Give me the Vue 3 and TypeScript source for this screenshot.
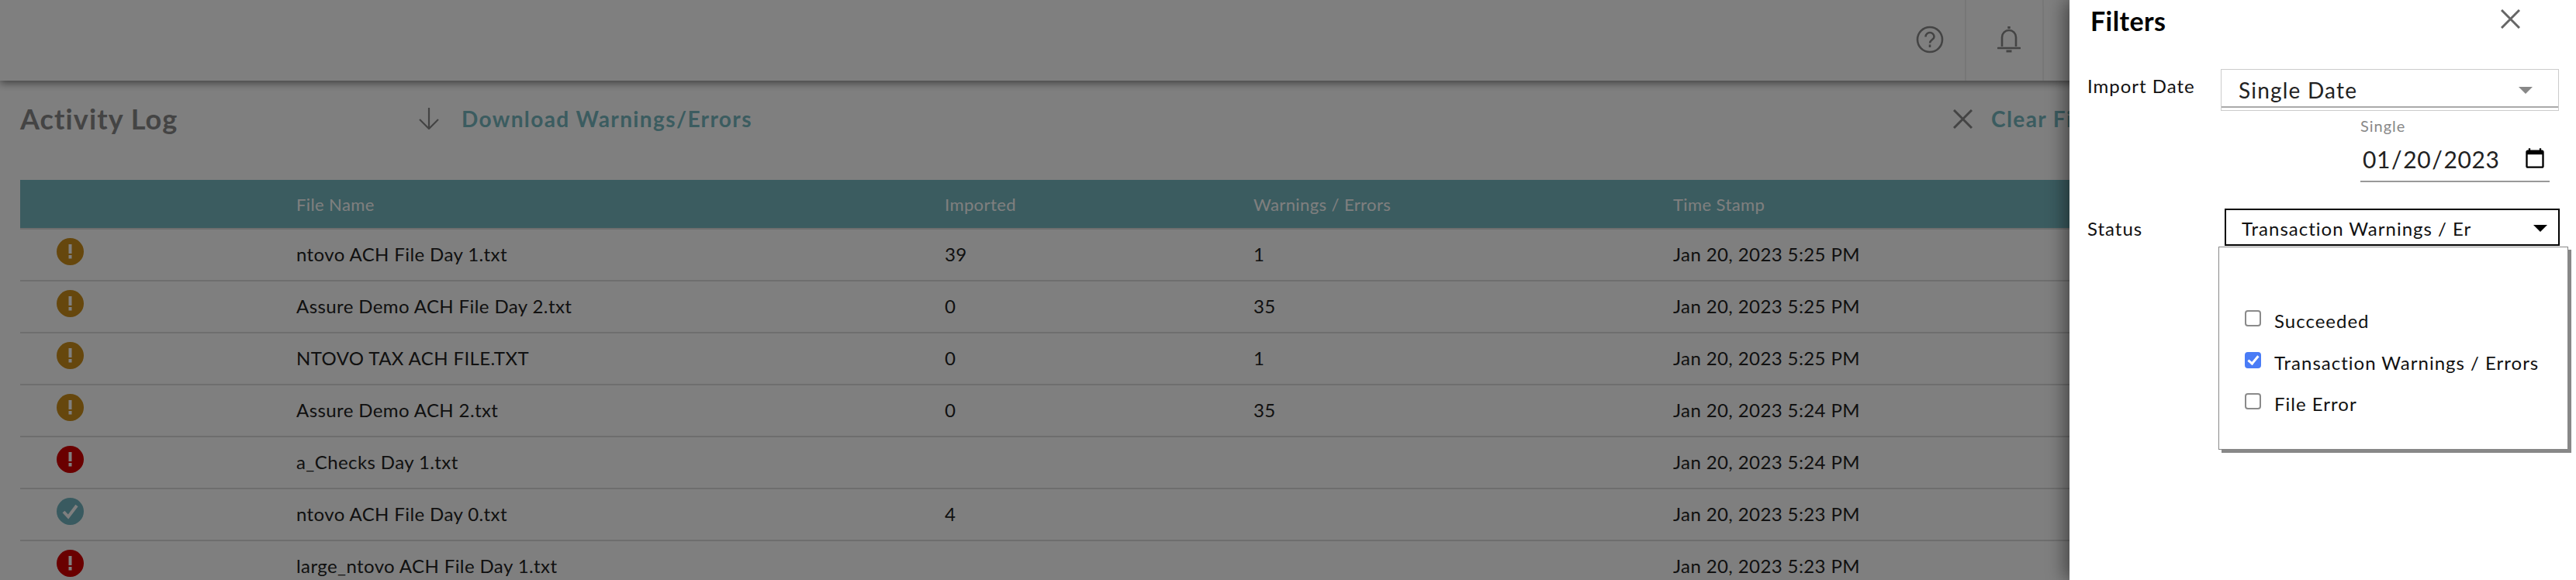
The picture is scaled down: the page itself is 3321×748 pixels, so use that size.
<script setup lang="ts">
type Status = 'warn' | 'error' | 'ok'
interface Row { status: Status; name: string; imported: string; warnings: string; time: string }

const rows: Row[] = [
  { status: 'warn', name: 'ntovo ACH File Day 1.txt', imported: '39', warnings: '1', time: 'Jan 20, 2023 5:25 PM' },
  { status: 'warn', name: 'Assure Demo ACH File Day 2.txt', imported: '0', warnings: '35', time: 'Jan 20, 2023 5:25 PM' },
  { status: 'warn', name: 'NTOVO TAX ACH FILE.TXT', imported: '0', warnings: '1', time: 'Jan 20, 2023 5:25 PM' },
  { status: 'warn', name: 'Assure Demo ACH 2.txt', imported: '0', warnings: '35', time: 'Jan 20, 2023 5:24 PM' },
  { status: 'error', name: 'a_Checks Day 1.txt', imported: '', warnings: '', time: 'Jan 20, 2023 5:24 PM' },
  { status: 'ok', name: 'ntovo ACH File Day 0.txt', imported: '4', warnings: '', time: 'Jan 20, 2023 5:23 PM' },
  { status: 'error', name: 'large_ntovo ACH File Day 1.txt', imported: '', warnings: '', time: 'Jan 20, 2023 5:23 PM' },
]

const options = [
  { label: 'Succeeded', checked: false },
  { label: 'Transaction Warnings / Errors', checked: true },
  { label: 'File Error', checked: false },
]
</script>

<template>
  <div class="page">
    <header class="topbar">
      <div class="top-cell">
        <svg viewBox="0 0 36 36" width="36" height="36" fill="none" stroke="#888" stroke-width="2.6">
          <circle cx="18" cy="18" r="16" />
          <path d="M12.5 14.5a5.5 5.5 0 0 1 11 0c0 3.6-5.5 4-5.5 8" />
          <path d="M18 24.5v3.5" />
        </svg>
      </div>
      <div class="top-cell bell-cell">
        <svg viewBox="0 0 30 36" width="30" height="36" fill="none" stroke="#888" stroke-width="2.6">
          <path d="M15 1v3" stroke-width="3.4" />
          <path d="M6 27V15a9 9 0 0 1 18 0v12" />
          <path d="M1 29h28" stroke-linecap="round" />
          <path d="M11.500 33h7" stroke-width="3" />
        </svg>
      </div>
    </header>

    <section class="toolbar">
      <h1 class="title">Activity Log</h1>
      <a class="action">
        <svg viewBox="0 0 28 28" width="28" height="28" fill="none" stroke="#888" stroke-width="2.2">
          <path d="M14 0v27M2 15l12 12 12-12" />
        </svg>
        <span>Download Warnings/Errors</span>
      </a>
      <a class="action clear">
        <svg viewBox="0 0 25 25" width="25" height="25" fill="none" stroke="#888" stroke-width="3">
          <path d="M1 1l23 23M24 1L1 24" />
        </svg>
        <span>Clear Filters</span>
      </a>
    </section>

    <table class="log">
      <colgroup>
        <col class="c-icon" /><col class="c-file" /><col class="c-imp" /><col class="c-warn" /><col />
      </colgroup>
      <thead>
        <tr>
          <th></th>
          <th>File Name</th>
          <th>Imported</th>
          <th>Warnings / Errors</th>
          <th>Time Stamp</th>
        </tr>
      </thead>
      <tbody>
        <tr v-for="(r, i) in rows" :key="i">
          <td class="icon-cell">
            <svg class="status" viewBox="0 0 35 35" width="35" height="35">
              <circle cx="17.5" cy="17.5" r="17.500" :class="'s-' + r.status" />
              <path v-if="r.status === 'ok'" d="M9 18l6 6.500L26 10" fill="none" stroke="#fff" stroke-width="4" />
              <template v-else>
                <rect x="15.500" y="8" width="4" height="12" fill="#fff" />
                <rect x="15.500" y="22" width="4" height="4.500" fill="#fff" />
              </template>
            </svg>
          </td>
          <td>{{ r.name }}</td>
          <td>{{ r.imported }}</td>
          <td>{{ r.warnings }}</td>
          <td>{{ r.time }}</td>
        </tr>
      </tbody>
    </table>

    <div class="scrim"></div>

    <aside class="panel">
      <div class="panel-head">
        <h2>Filters</h2>
        <svg viewBox="0 0 25 25" width="25" height="25" fill="none" stroke="#666" stroke-width="3">
          <path d="M1 1l23 23M24 1L1 24" />
        </svg>
      </div>

      <div class="field date-field">
        <label class="lbl">Import Date</label>
        <div class="stack">
          <div class="select-soft">
            <span>Single Date</span>
            <i class="tri soft"></i>
          </div>
          <div class="date-box">
            <span class="date-cap">Single</span>
            <input class="date-input" type="date" value="2023-01-20" />
          </div>
        </div>
      </div>

      <div class="field status-field">
        <label class="lbl">Status</label>
        <div class="status-wrap">
          <div class="select-hard">
            <span class="clip">Transaction Warnings / Er</span>
            <i class="tri"></i>
          </div>
          <div class="menu">
            <label v-for="o in options" :key="o.label" class="opt">
              <input type="checkbox" :checked="o.checked" />
              <span>{{ o.label }}</span>
            </label>
          </div>
        </div>
      </div>
    </aside>
  </div>
</template>

<style>
html, body { margin: 0; background: #fff; overflow: hidden; }
</style>

<style scoped>
.page {
  position: relative;
  width: 3321px;
  height: 748px;
  overflow: hidden;
  background: #fff;
  color: #222;
  font-family: "Lato", "Liberation Sans", sans-serif;
  font-size: 24px;
  letter-spacing: .4px;
}
.topbar {
  height: 104px;
  display: flex;
  justify-content: flex-end;
  padding-right: 686px;
  box-shadow: 0 3px 10px rgba(0, 0, 0, .5);
  position: relative;
}
.top-cell {
  display: flex;
  align-items: center;
  justify-content: center;
  width: 90px;
  padding-bottom: 3px;
  box-sizing: border-box;
}
.bell-cell {
  width: 102px;
  padding-left: 12px;
  border-left: 2px solid #eee;
  border-right: 2px solid #eee;
}
.toolbar {
  display: grid;
  grid-template-columns: 513px 1979px 1fr;
  align-items: center;
  padding-left: 26px;
  height: 128px;
}
.title {
  margin: -30px 0 0;
  font-size: 36px;
  font-weight: 700;
  letter-spacing: 1.1px;
  color: #888;
}
.action {
  margin-top: -30px;
  display: flex;
  align-items: center;
  gap: 28px;
  color: #76b8c0;
  font-size: 28px;
  font-weight: 700;
  letter-spacing: 1.4px;
}
.clear { gap: 24px; }
.log {
  width: 3269px;
  margin-left: 26px;
  border-spacing: 0;
  table-layout: fixed;
}
.c-icon { width: 356px; }
.c-file { width: 836px; }
.c-imp { width: 398px; }
.c-warn { width: 541px; }
.log th {
  height: 64px;
  box-sizing: border-box;
  background: #76b8c0;
  border-bottom: 2px solid #ddd;
  color: #fff;
  font-size: 22px;
  font-weight: 400;
  text-align: left;
  padding: 0;
}
.log td {
  height: 67px;
  box-sizing: border-box;
  border-bottom: 2px solid #ddd;
  padding: 0 0 2px;
}
.log td.icon-cell { padding: 0; }
.status {
  display: block;
  margin: -9px 0 0 47px;
}
.s-warn { fill: #cc8f1b; }
.s-error { fill: #d40000; }
.s-ok { fill: #72b5c0; }
.scrim {
  position: absolute;
  inset: 0;
  background: rgba(0, 0, 0, .5);
}
.panel {
  position: absolute;
  top: 0;
  right: 0;
  bottom: 0;
  width: 653px;
  background: #fff;
  box-shadow: -6px 0 22px rgba(0, 0, 0, .45);
  padding: 0 21px 0 23px;
  box-sizing: border-box;
  letter-spacing: 1px;
}
.panel-head {
  height: 53px;
  display: flex;
  align-items: center;
  justify-content: space-between;
  padding: 0 51px 0 4px;
  margin-bottom: 36px;
}
.panel-head svg { margin-top: -4px; }
.panel-head h2 {
  margin: 0;
  font-size: 34px;
  font-weight: 700;
  letter-spacing: .4px;
  color: #000;
}
.field {
  display: grid;
  grid-template-columns: 172px minmax(0, 1fr);
}
.lbl { color: #111; }
.date-field .lbl { line-height: 44px; }
.select-soft {
  height: 54px;
  margin-right: 1px;
  box-sizing: border-box;
  border: 1px solid #ccc;
  box-shadow: inset 0 -3px 0 #fff, inset 0 -5px 0 #aaa;
  display: flex;
  align-items: center;
  justify-content: space-between;
  padding: 0 33px 0 22px;
  font-size: 28px;
  letter-spacing: 1.2px;
}
.tri {
  width: 0;
  height: 0;
  border-left: 9px solid transparent;
  border-right: 9px solid transparent;
  border-top: 9px solid #000;
}
.tri.soft { border-top-color: #888; }
.date-box {
  width: 244px;
  margin: 7px 0 0 180px;
  display: flex;
  flex-direction: column;
}
.date-cap {
  font-size: 20px;
  color: #888;
  line-height: 24px;
}
.date-input {
  width: 100%;
  min-width: 0;
  height: 61px;
  box-sizing: border-box;
  border: 0;
  border-bottom: 2px solid #999;
  padding: 3px 2px 0;
  font: inherit;
  font-size: 30px;
  letter-spacing: .6px;
  color: #222;
  background: transparent;
  outline: none;
}
.status-field { margin-top: 34px; }
.status-field .lbl { line-height: 52px; }
.status-wrap { position: relative; margin-left: 5px; }
.select-hard {
  height: 48px;
  box-sizing: border-box;
  border: 2px solid #000;
  display: flex;
  align-items: center;
  justify-content: space-between;
  padding: 3px 14px 0 20px;
  color: #111;
}
.menu {
  position: absolute;
  top: 49px;
  left: -8px;
  width: 451px;
  height: 262px;
  box-sizing: border-box;
  background: #fff;
  border: 1px solid #888;
  box-shadow: 4px 4px 0 #888;
  padding: 68px 0 0 33px;
  display: flex;
  flex-direction: column;
}
.opt {
  height: 53.500px;
  display: flex;
  align-items: center;
  gap: 17px;
  color: #111;
}
.opt input {
  appearance: none;
  position: relative;
  width: 21px;
  height: 21px;
  margin: -6px 0 0;
  box-sizing: border-box;
  border: 2px solid #8a8a8a;
  border-radius: 4px;
  background: #fff;
}
.opt input:checked {
  background: #4a7cf6;
  border-color: #4a7cf6;
}
.opt input:checked::after {
  content: "";
  position: absolute;
  left: 4.5px;
  top: 0;
  width: 5px;
  height: 11px;
  border: solid #fff;
  border-width: 0 3px 3px 0;
  transform: rotate(40deg);
}
</style>
